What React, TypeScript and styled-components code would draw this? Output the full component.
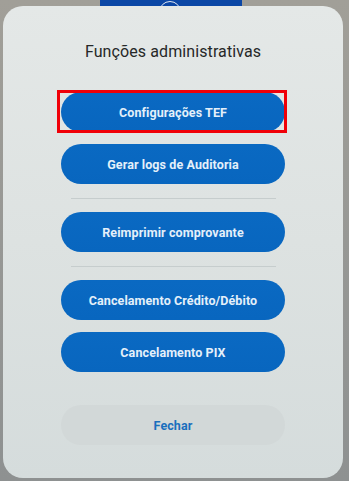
import React from "react";
import styled, { createGlobalStyle } from "styled-components";

const Global = createGlobalStyle`
  html, body { margin: 0; padding: 0; }
  body {
    width: 349px;
    height: 481px;
    overflow: hidden;
    background: linear-gradient(180deg, #a19f98 0%, #979895 50%, #8e9191 100%);
    font-family: Roboto, "Noto Sans", "Liberation Sans", sans-serif;
  }
`;

const Screen = styled.div`
  width: 349px;
  height: 481px;
  display: flex;
  flex-direction: column;
  align-items: stretch;
`;

const TopStrip = styled.div`
  height: 6px;
  overflow: hidden;
  display: flex;
  padding-left: 100px;
`;

const Banner = styled.div`
  width: 142px;
  height: 30px;
  background: #0b47a6;
  display: flex;
  justify-content: center;
`;

const BannerRing = styled.div`
  width: 20px;
  height: 20px;
  margin-top: 1px;
  margin-right: 2px;
  border: 1.5px solid #dfe6f2;
  border-radius: 50%;
`;

const Dialog = styled.div`
  margin: 0 6px 0 3px;
  height: 472px;
  box-sizing: border-box;
  border-radius: 20px;
  background: linear-gradient(180deg, #e4e8e7 0%, #dde2e1 50%, #d5dcdc 100%);
  display: flex;
  flex-direction: column;
  align-items: center;
  padding-top: 36px;
`;

const Title = styled.h1`
  margin: 0 0 30px;
  font-size: 16px;
  line-height: 20px;
  font-weight: 400;
  color: #262828;
  letter-spacing: 0.1px;
`;

const Actions = styled.div`
  display: flex;
  flex-direction: column;
  align-items: center;
  gap: 12px;
`;

const ActionButton = styled.button<{ $variant?: "primary" | "secondary"; $highlight?: boolean }>`
  position: relative;
  width: 224px;
  height: 40px;
  border: none;
  border-radius: 20px;
  font-family: Roboto, "Noto Sans", "Liberation Sans", sans-serif;
  font-size: 12.5px;
  font-weight: 700;
  letter-spacing: 0.1px;
  cursor: pointer;
  background: ${(p) =>
    p.$variant === "secondary"
      ? "#d2d8d8"
      : "linear-gradient(180deg, #0a69c2 0%, #0866bf 100%)"};
  color: ${(p) => (p.$variant === "secondary" ? "#1a6fbd" : "#e4f0fa")};

  ${(p) =>
    p.$highlight &&
    `
    &::after {
      content: "";
      position: absolute;
      left: -4px;
      right: -2px;
      top: -2px;
      bottom: -1px;
      border: 3px solid #f00008;
      pointer-events: none;
    }
  `}
`;

const Separator = styled.hr`
  width: 205px;
  height: 1px;
  margin: 2px 0 1px;
  border: none;
  background: #c6cdcd;
`;

const CloseButton = styled(ActionButton)`
  margin-top: 21px;
`;

export default function App() {
  return (
    <>
      <Global />
      <Screen>
        <TopStrip>
          <Banner>
            <BannerRing />
          </Banner>
        </TopStrip>
        <Dialog>
          <Title>Funções administrativas</Title>
          <Actions>
            <ActionButton $highlight>Configurações TEF</ActionButton>
            <ActionButton>Gerar logs de Auditoria</ActionButton>
            <Separator />
            <ActionButton>Reimprimir comprovante</ActionButton>
            <Separator />
            <ActionButton>Cancelamento Crédito/Débito</ActionButton>
            <ActionButton>Cancelamento PIX</ActionButton>
            <CloseButton $variant="secondary">Fechar</CloseButton>
          </Actions>
        </Dialog>
      </Screen>
    </>
  );
}
